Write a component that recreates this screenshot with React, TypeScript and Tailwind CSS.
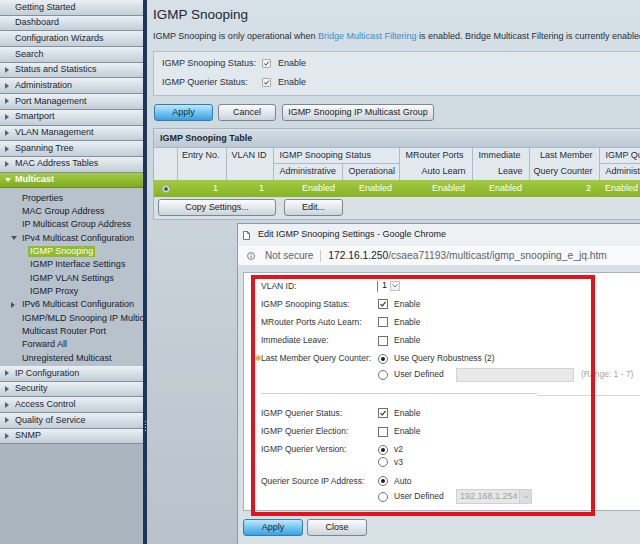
import React from 'react'

function RightArrow({ color = '#56626e' }: { color?: string }) {
  return (
    <svg width="4" height="6" viewBox="0 0 4 6">
      <path d="M0 0 L4 3 L0 6 Z" fill={color} />
    </svg>
  )
}

function DownArrow({ color = '#56626e' }: { color?: string }) {
  return (
    <svg width="6" height="4" viewBox="0 0 6 4">
      <path d="M0 0 L6 0 L3 4 Z" fill={color} />
    </svg>
  )
}

function Tick({ size = 8 }: { size?: number }) {
  return (
    <svg width={size} height={size} viewBox="0 0 10 10">
      <path d="M1.8 5.2 L4.1 7.4 L8.3 2.4" fill="none" stroke="#2a2a2a" strokeWidth="1.3" />
    </svg>
  )
}

function NavBar({ label, arrow }: { label: string; arrow?: boolean }) {
  return (
    <div className="h-[15.7px] shrink-0 flex items-center pl-[5px] bg-linear-to-b from-[#ebf0f4] to-[#c3ced7] border-b border-[#83919e] text-[9px] text-[#1b2530]">
      <span className="w-[10px] flex items-center">{arrow && <RightArrow />}</span>
      <span className="whitespace-nowrap">{label}</span>
    </div>
  )
}

function SubItem({ label, pl, arrow, active }: { label: string; pl: string; arrow?: 'right' | 'down'; active?: boolean }) {
  return (
    <div className={`h-[13.33px] flex items-center text-[9px] text-[#16202a] whitespace-nowrap ${pl}`}>
      {arrow && (
        <span className="w-[11px] flex items-center">
          {arrow === 'down' ? <DownArrow color="#4b5763" /> : <RightArrow color="#4b5763" />}
        </span>
      )}
      <span className={active ? 'bg-[#8fbb2c] text-white px-[2px] leading-[11px]' : ''}>{label}</span>
    </div>
  )
}

function Sidebar() {
  return (
    <div className="w-[143px] shrink-0 h-full bg-[#aab5bf] flex flex-col overflow-hidden">
      <NavBar label="Getting Started" />
      <NavBar label="Dashboard" />
      <NavBar label="Configuration Wizards" />
      <NavBar label="Search" />
      <NavBar label="Status and Statistics" arrow />
      <NavBar label="Administration" arrow />
      <NavBar label="Port Management" arrow />
      <NavBar label="Smartport" arrow />
      <NavBar label="VLAN Management" arrow />
      <NavBar label="Spanning Tree" arrow />
      <NavBar label="MAC Address Tables" arrow />
      <div className="h-[15.7px] shrink-0 flex items-center pl-[5px] bg-linear-to-b from-[#a4cb45] to-[#7fab1f] border-b border-[#6a8f1a] text-[9px] text-white font-bold">
        <span className="w-[10px] flex items-center"><DownArrow color="#ffffff" /></span>
        <span>Multicast</span>
      </div>
      <div className="bg-[#b7c2cc] pt-[3.5px] pb-[1px] shrink-0">
        <SubItem label="Properties" pl="pl-[22px]" />
        <SubItem label="MAC Group Address" pl="pl-[22px]" />
        <SubItem label="IP Multicast Group Address" pl="pl-[22px]" />
        <SubItem label="IPv4 Multicast Configuration" pl="pl-[11px]" arrow="down" />
        <SubItem label="IGMP Snooping" pl="pl-[28px]" active />
        <SubItem label="IGMP Interface Settings" pl="pl-[30px]" />
        <SubItem label="IGMP VLAN Settings" pl="pl-[30px]" />
        <SubItem label="IGMP Proxy" pl="pl-[30px]" />
        <SubItem label="IPv6 Multicast Configuration" pl="pl-[11px]" arrow="right" />
        <SubItem label="IGMP/MLD Snooping IP Multicast Group" pl="pl-[22px]" />
        <SubItem label="Multicast Router Port" pl="pl-[22px]" />
        <SubItem label="Forward All" pl="pl-[22px]" />
        <SubItem label="Unregistered Multicast" pl="pl-[22px]" />
      </div>
      <NavBar label="IP Configuration" arrow />
      <NavBar label="Security" arrow />
      <NavBar label="Access Control" arrow />
      <NavBar label="Quality of Service" arrow />
      <NavBar label="SNMP" arrow />
    </div>
  )
}

function GrayButton({ children, w }: { children: React.ReactNode; w: string }) {
  return (
    <button className={`${w} h-[17px] rounded-[3px] border border-[#7b8792] bg-linear-to-b from-[#fbfcfd] to-[#ccd4db] text-[9px] text-[#1b1b1b] flex items-center justify-center`}>
      {children}
    </button>
  )
}

function BlueButton({ children, w }: { children: React.ReactNode; w: string }) {
  return (
    <button className={`${w} h-[17px] rounded-[3px] border border-[#2f7db3] bg-linear-to-b from-[#bfe8fc] via-[#72c6f1] to-[#3b9fdc] text-[9px] text-[#0f2a42] flex items-center justify-center`}>
      {children}
    </button>
  )
}

function PanelCheck() {
  return (
    <span className="w-[9px] h-[9px] border border-[#a9a9a9] bg-[#f3f3f3] rounded-[1px] flex items-center justify-center">
      <Tick size={7} />
    </span>
  )
}

function SnoopingTable() {
  const th = 'border-r border-[#aebbc6] text-[9px] font-normal text-[#222c36] whitespace-nowrap'
  const td = 'text-[9px] text-white text-right pr-[7px] whitespace-nowrap'
  return (
    <table className="table-fixed border-collapse w-[560px]">
      <colgroup>
        <col className="w-[23px]" />
        <col className="w-[49px]" />
        <col className="w-[47px]" />
        <col className="w-[69px]" />
        <col className="w-[57px]" />
        <col className="w-[73px]" />
        <col className="w-[57px]" />
        <col className="w-[70px]" />
        <col className="w-[115px]" />
      </colgroup>
      <thead className="bg-[#e2e9ee]">
        <tr className="h-[15px]">
          <th className={th}></th>
          <th className={`${th} text-right pr-[6px]`}>Entry No.</th>
          <th className={`${th} text-right pr-[6px]`}>VLAN ID</th>
          <th colSpan={2} className={`${th} text-left pl-[6px] border-b`}>IGMP Snooping Status</th>
          <th className={`${th} text-right pr-[8px]`}>MRouter Ports</th>
          <th className={`${th} text-right pr-[8px]`}>Immediate</th>
          <th className={`${th} text-right pr-[6px]`}>Last Member</th>
          <th className={`${th} text-left pl-[6px] border-b`}>IGMP Querier Status</th>
        </tr>
        <tr className="h-[17px]">
          <th className={th}></th>
          <th className={th}></th>
          <th className={th}></th>
          <th className={`${th} text-left pl-[6px]`}>Administrative</th>
          <th className={`${th} text-left pl-[6px]`}>Operational</th>
          <th className={`${th} text-right pr-[6px]`}>Auto Learn</th>
          <th className={`${th} text-right pr-[6px]`}>Leave</th>
          <th className={`${th} text-right pr-[6px]`}>Query Counter</th>
          <th className={`${th} text-left pl-[6px]`}>Administrative</th>
        </tr>
      </thead>
      <tbody>
        <tr className="h-[17px] bg-linear-to-b from-[#a2ca43] to-[#86b323]">
          <td>
            <span className="mx-auto w-[8px] h-[8px] rounded-full bg-[#f4f4f4] border border-[#9aa] flex items-center justify-center">
              <span className="w-[4px] h-[4px] rounded-full bg-[#555]" />
            </span>
          </td>
          <td className={`${td} pr-[8px]`}>1</td>
          <td className={`${td} pr-[9px]`}>1</td>
          <td className={td}>Enabled</td>
          <td className={`${td} pr-[6px]`}>Enabled</td>
          <td className={`${td} pr-[6px]`}>Enabled</td>
          <td className={`${td} pr-[6px]`}>Enabled</td>
          <td className={`${td} pr-[8px]`}>2</td>
          <td className="text-[9px] text-white text-left pl-[6px]">Enabled</td>
        </tr>
      </tbody>
    </table>
  )
}

function Box({ checked }: { checked?: boolean }) {
  return (
    <span className="w-[10px] h-[10px] shrink-0 border border-[#6f6f6f] bg-white flex items-center justify-center">
      {checked && <Tick size={8} />}
    </span>
  )
}

function Radio({ checked }: { checked?: boolean }) {
  return (
    <span className="w-[10px] h-[10px] shrink-0 rounded-full border border-[#6f6f6f] bg-white flex items-center justify-center">
      {checked && <span className="w-[4px] h-[4px] rounded-full bg-[#1e1e1e]" />}
    </span>
  )
}

function CheckRow({ label, checked, h }: { label: string; checked?: boolean; h: string }) {
  return (
    <div className={`${h} flex items-center pl-[17px]`}>
      <div className="w-[117px] shrink-0">{label}</div>
      <Box checked={checked} />
      <span className="ml-[6px]">Enable</span>
    </div>
  )
}

function EditDialog() {
  return (
    <div className="absolute left-[90px] top-[223px] w-[420px] bottom-0 border-l border-t border-[#8d9baa] bg-[#d8dfe5] flex flex-col">
      <div className="h-[22px] shrink-0 bg-[#eef1f4] flex items-center pl-[5px] text-[9px] text-[#202124]">
        <svg width="7" height="9" viewBox="0 0 7 9">
          <path d="M0.5 0.5 H4.5 L6.5 2.5 V8.5 H0.5 Z" fill="white" stroke="#555" strokeWidth="0.8" />
          <path d="M4.5 0.5 V2.5 H6.5" fill="none" stroke="#555" strokeWidth="0.8" />
        </svg>
        <span className="ml-[8px]">Edit IGMP Snooping Settings - Google Chrome</span>
      </div>
      <div className="h-[20px] shrink-0 bg-[#f8f9fa] flex items-center pl-[9px] border-b border-[#d9dce0] whitespace-nowrap">
        <svg width="8" height="8" viewBox="0 0 10 10">
          <circle cx="5" cy="5" r="4.3" fill="none" stroke="#5f6368" strokeWidth="1" />
          <path d="M5 4.3 V7.4" stroke="#5f6368" strokeWidth="1.1" />
          <circle cx="5" cy="2.9" r="0.65" fill="#5f6368" />
        </svg>
        <span className="ml-[10px] text-[10px] text-[#5f6368]">Not secure</span>
        <span className="mx-[7px] w-px h-[12px] bg-[#c6c9cc]" />
        <span className="text-[10.25px] text-[#202124]">
          172.16.1.250<span className="text-[#5f6368]">/csaea71193/multicast/igmp_snooping_e_jq.htm</span>
        </span>
      </div>

      <div className="mt-[6px] ml-[5px] w-[420px] h-[239px] shrink-0 bg-white border border-[#a8b3bd] pt-[4px] text-[8.5px] text-[#333]">
        <div className="h-[18px] flex items-center pl-[17px]">
          <div className="w-[116px] shrink-0">VLAN ID:</div>
          <div className="h-[11px] flex items-center border-l border-[#7c7c7c] pl-[4px]">
            <span className="text-[9px] text-[#222]">1</span>
            <span className="ml-[3px] w-[10px] h-[10px] border border-[#c3c3c3] bg-[#f1f1f1] flex items-center justify-center">
              <svg width="6" height="4" viewBox="0 0 6 4">
                <path d="M0.5 0.5 L3 3 L5.5 0.5" fill="none" stroke="#777" strokeWidth="0.9" />
              </svg>
            </span>
          </div>
        </div>
        <CheckRow label="IGMP Snooping Status:" checked h="h-[18px]" />
        <CheckRow label="MRouter Ports Auto Learn:" h="h-[18px]" />
        <CheckRow label="Immediate Leave:" h="h-[19px]" />
        <div className="flex pl-[11px]">
          <div className="h-[17px] flex items-center shrink-0">
            <span className="w-[6px] text-[#f2a21b] text-[8px] leading-none">✱</span>
            <span className="w-[117px]">Last Member Query Counter:</span>
          </div>
          <div className="flex flex-col">
            <div className="h-[17px] flex items-center">
              <Radio checked />
              <span className="ml-[6px]">Use Query Robustness (2)</span>
            </div>
            <div className="h-[15px] flex items-center whitespace-nowrap">
              <Radio />
              <span className="ml-[6px] w-[62px]">User Defined</span>
              <span className="w-[118px] h-[14px] bg-[#e9e9e9] border border-[#d3d3d3]" />
              <span className="ml-[7px] text-[#a5a5a5]">(Range: 1 - 7)</span>
            </div>
          </div>
        </div>
        <div className="mt-[11px] flex items-start">
          <span className="ml-[17px] w-[276px] h-px bg-[#cfcfcf]" />
          <span className="mt-[2px] w-[120px] h-px bg-[#d6d6d6]" />
        </div>
        <div className="mt-[8px]">
          <CheckRow label="IGMP Querier Status:" checked h="h-[18px]" />
          <CheckRow label="IGMP Querier Election:" h="h-[19px]" />
        </div>
        <div className="mt-[2px] flex pl-[17px]">
          <div className="w-[117px] h-[13px] flex items-center shrink-0">IGMP Querier Version:</div>
          <div className="flex flex-col">
            <div className="h-[13px] flex items-center">
              <Radio checked />
              <span className="ml-[6px]">v2</span>
            </div>
            <div className="h-[12px] flex items-center">
              <Radio />
              <span className="ml-[6px]">v3</span>
            </div>
          </div>
        </div>
        <div className="mt-[5px] flex pl-[17px]">
          <div className="w-[117px] h-[16px] flex items-center shrink-0">Querier Source IP Address:</div>
          <div className="flex flex-col">
            <div className="h-[16px] flex items-center">
              <Radio checked />
              <span className="ml-[6px]">Auto</span>
            </div>
            <div className="h-[15px] flex items-center whitespace-nowrap">
              <Radio />
              <span className="ml-[6px] w-[62px]">User Defined</span>
              <span className="w-[76px] h-[15px] bg-[#e7e7e7] border border-[#d0d0d0] flex items-center">
                <span className="flex-1 pl-[3px] text-[9px] text-[#a2a2a2]">192.168.1.254</span>
                <span className="w-[12px] h-full bg-[#dcdcdc] border-l border-[#cfcfcf] flex items-center justify-center">
                  <svg width="6" height="4" viewBox="0 0 6 4">
                    <path d="M0.5 0.5 L3 3 L5.5 0.5" fill="none" stroke="#b0b0b0" strokeWidth="0.9" />
                  </svg>
                </span>
              </span>
            </div>
          </div>
        </div>
      </div>

      <div className="mt-[8px] ml-[5px] flex gap-[4px]">
        <BlueButton w="w-[60px]">Apply</BlueButton>
        <GrayButton w="w-[60px]">Close</GrayButton>
      </div>

      <div className="absolute left-[13px] top-[51px] w-[344px] h-[241px] border-[4px] border-[#e1141d]" />
    </div>
  )
}

export default function App() {
  return (
    <div className="w-[640px] h-[544px] overflow-hidden flex font-['Liberation_Sans',Arial,sans-serif] bg-[#aab5bf]">
      <Sidebar />
      <div className="w-[4px] shrink-0 bg-[#1e3756] flex flex-col items-center pt-[421px] gap-[2px]">
        <span className="w-px h-px bg-[#c9d4de]" />
        <span className="w-px h-px bg-[#c9d4de]" />
        <span className="w-px h-px bg-[#c9d4de]" />
        <span className="w-px h-px bg-[#c9d4de]" />
      </div>

      <div className="flex-1 relative overflow-hidden bg-linear-to-b from-[#d6e0e7] to-[#b9c2ca]">
        <div className="pl-[6px] w-[580px]">
          <div className="h-[30px] flex items-center text-[13.5px] text-[#1c2630]">IGMP Snooping</div>
          <div className="h-[13px] leading-[13px] text-[9px] text-[#26303a] whitespace-nowrap">
            IGMP Snooping is only operational when{' '}
            <span className="text-[#3a8fcc]">Bridge Multicast Filtering</span> is enabled. Bridge Multicast Filtering is
            currently enabled.
          </div>

          <div className="mt-[8px] h-[45px] border border-[#b3c0ca] bg-[#e2e9ee] pt-[2px] pl-[8px] text-[9px] text-[#26303a]">
            <div className="h-[19px] flex items-center">
              <span className="w-[100px]">IGMP Snooping Status:</span>
              <PanelCheck />
              <span className="ml-[7px]">Enable</span>
            </div>
            <div className="h-[19px] flex items-center">
              <span className="w-[100px]">IGMP Querier Status:</span>
              <PanelCheck />
              <span className="ml-[7px]">Enable</span>
            </div>
          </div>

          <div className="mt-[8px] ml-[1px] flex">
            <BlueButton w="w-[59px]">Apply</BlueButton>
            <div className="ml-[5px]"><GrayButton w="w-[58px]">Cancel</GrayButton></div>
            <div className="ml-[6px]"><GrayButton w="w-[152px]">IGMP Snooping IP Multicast Group</GrayButton></div>
          </div>

          <div className="mt-[7px] border border-[#a7b5c1] bg-[#d9e1e7] pb-[3px]">
            <div className="mt-[2px] h-[17px] flex items-center pl-[6px] bg-linear-to-b from-[#d1dbe3] to-[#bccad5] text-[9px] font-bold text-[#1b2631] border-b border-[#a9b7c3]">
              IGMP Snooping Table
            </div>
            <SnoopingTable />
            <div className="mt-[2px] ml-[4px] flex gap-[8px]">
              <GrayButton w="w-[118px]">Copy Settings...</GrayButton>
              <GrayButton w="w-[59px]">Edit...</GrayButton>
            </div>
          </div>
        </div>

        <EditDialog />
      </div>
    </div>
  )
}
